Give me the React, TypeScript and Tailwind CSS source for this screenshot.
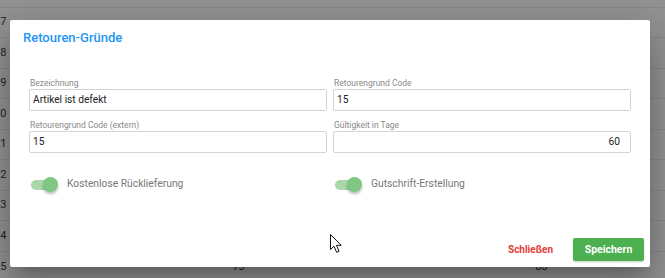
import React from 'react'

type Row = {
    no: string
    h: string
    code?: string
    days?: string
}

const rows: Row[] = [
    { no: '16', h: 'h-[30px]' },
    { no: '17', h: 'h-[30px]' },
    { no: '18', h: 'h-[31px]' },
    { no: '19', h: 'h-[30px]' },
    { no: '20', h: 'h-[31px]' },
    { no: '21', h: 'h-[30px]' },
    { no: '22', h: 'h-[31px]' },
    { no: '23', h: 'h-[30px]' },
    { no: '24', h: 'h-[31px]' },
    { no: '25', h: 'h-[31px]', code: '15', days: '60' },
]

const Field = ({ label, value, right }: { label: string; value: string; right?: boolean }) => {
    return (
        <div className="flex flex-col">
            <label className="h-[12px] pl-[1px] text-[8.5px] leading-[12px] text-[#8a8a8a]">{label}</label>
            <div
                className={
                    right
                        ? 'h-[22px] border border-[#d4d4d4] rounded-[2px] pr-[10px] flex items-center justify-end text-[10.2px] text-[#222]'
                        : 'h-[22px] border border-[#d4d4d4] rounded-[2px] pl-[3px] flex items-center text-[10.2px] text-[#222]'
                }
            >
                {value}
            </div>
        </div>
    )
}

const Toggle = ({ label }: { label: string }) => {
    return (
        <div className="flex items-center h-[20px] ml-[2px]">
            <div className="relative w-[27px] h-[15px]">
                <div className="absolute left-0 top-[3px] w-[24px] h-[10px] rounded-full bg-[#a8d8aa]"></div>
                <div className="absolute left-[12px] top-0 w-[15px] h-[15px] rounded-full bg-[#7fc783] shadow-[0_2px_3px_rgba(0,0,0,0.28)]"></div>
            </div>
            <span className="ml-[9px] text-[10.3px] text-[#777]">{label}</span>
        </div>
    )
}

const App = () => {
    return (
        <div className="relative w-[665px] h-[278px] overflow-hidden bg-[#939393] font-['Roboto',sans-serif]">
            {/* table behind the dialog */}
            <div className="flex flex-col mt-[-22px]">
                {rows.map((row, index) => {
                    return (
                        <div key={index} className={`${row.h} border-b border-[#878787] flex items-center text-[11px] text-[#222]`}>
                            <span className="ml-[-6px] w-[238px]">{row.no}</span>
                            <span className="w-[303px]">{row.code}</span>
                            <span>{row.days}</span>
                        </div>
                    )
                })}
            </div>

            {/* dialog */}
            <div className="absolute left-[10px] top-[20px] w-[640px] bg-white rounded-[2px] shadow-[0_11px_15px_-7px_rgba(0,0,0,0.2),0_24px_38px_3px_rgba(0,0,0,0.14),0_9px_46px_8px_rgba(0,0,0,0.12)] pt-[8px] pb-[6px]">
                <h2 className="pl-[13px] h-[20px] text-[13px] leading-[20px] font-medium text-[#2196f3]">Retouren-Gründe</h2>

                <div className="mt-[29px] px-[19px] grid grid-cols-2 gap-x-[6px] gap-y-[8px]">
                    <Field label="Bezeichnung" value="Artikel ist defekt" />
                    <Field label="Retourengrund Code" value="15" />
                    <Field label="Retourengrund Code (extern)" value="15" />
                    <Field label="Gültigkeit in Tage" value="60" right />
                </div>

                <div className="mt-[21px] px-[19px] grid grid-cols-2 gap-x-[6px]">
                    <Toggle label="Kostenlose Rücklieferung" />
                    <Toggle label="Gutschrift-Erstellung" />
                </div>

                <div className="mt-[44px] pr-[6px] flex justify-end items-center">
                    <button className="mr-[20px] text-[10px] font-bold text-[#e53935]">Schließen</button>
                    <button className="w-[71px] h-[23px] rounded-[2px] bg-[#4caf50] text-white text-[10.5px] font-bold shadow-[0_1px_2px_rgba(0,0,0,0.2)]">Speichern</button>
                </div>
            </div>

            {/* mouse pointer */}
            <svg className="absolute left-[330px] top-[234px]" width="13" height="20" viewBox="0 0 13 20">
                <path d="M0.5 0.5 L0.5 15.5 L4 12.2 L6.6 18.3 L9 17.3 L6.5 11.3 L11.2 11.3 Z" fill="#fff" stroke="#111" strokeWidth="1" strokeLinejoin="round" />
            </svg>
        </div>
    )
}

export default App
